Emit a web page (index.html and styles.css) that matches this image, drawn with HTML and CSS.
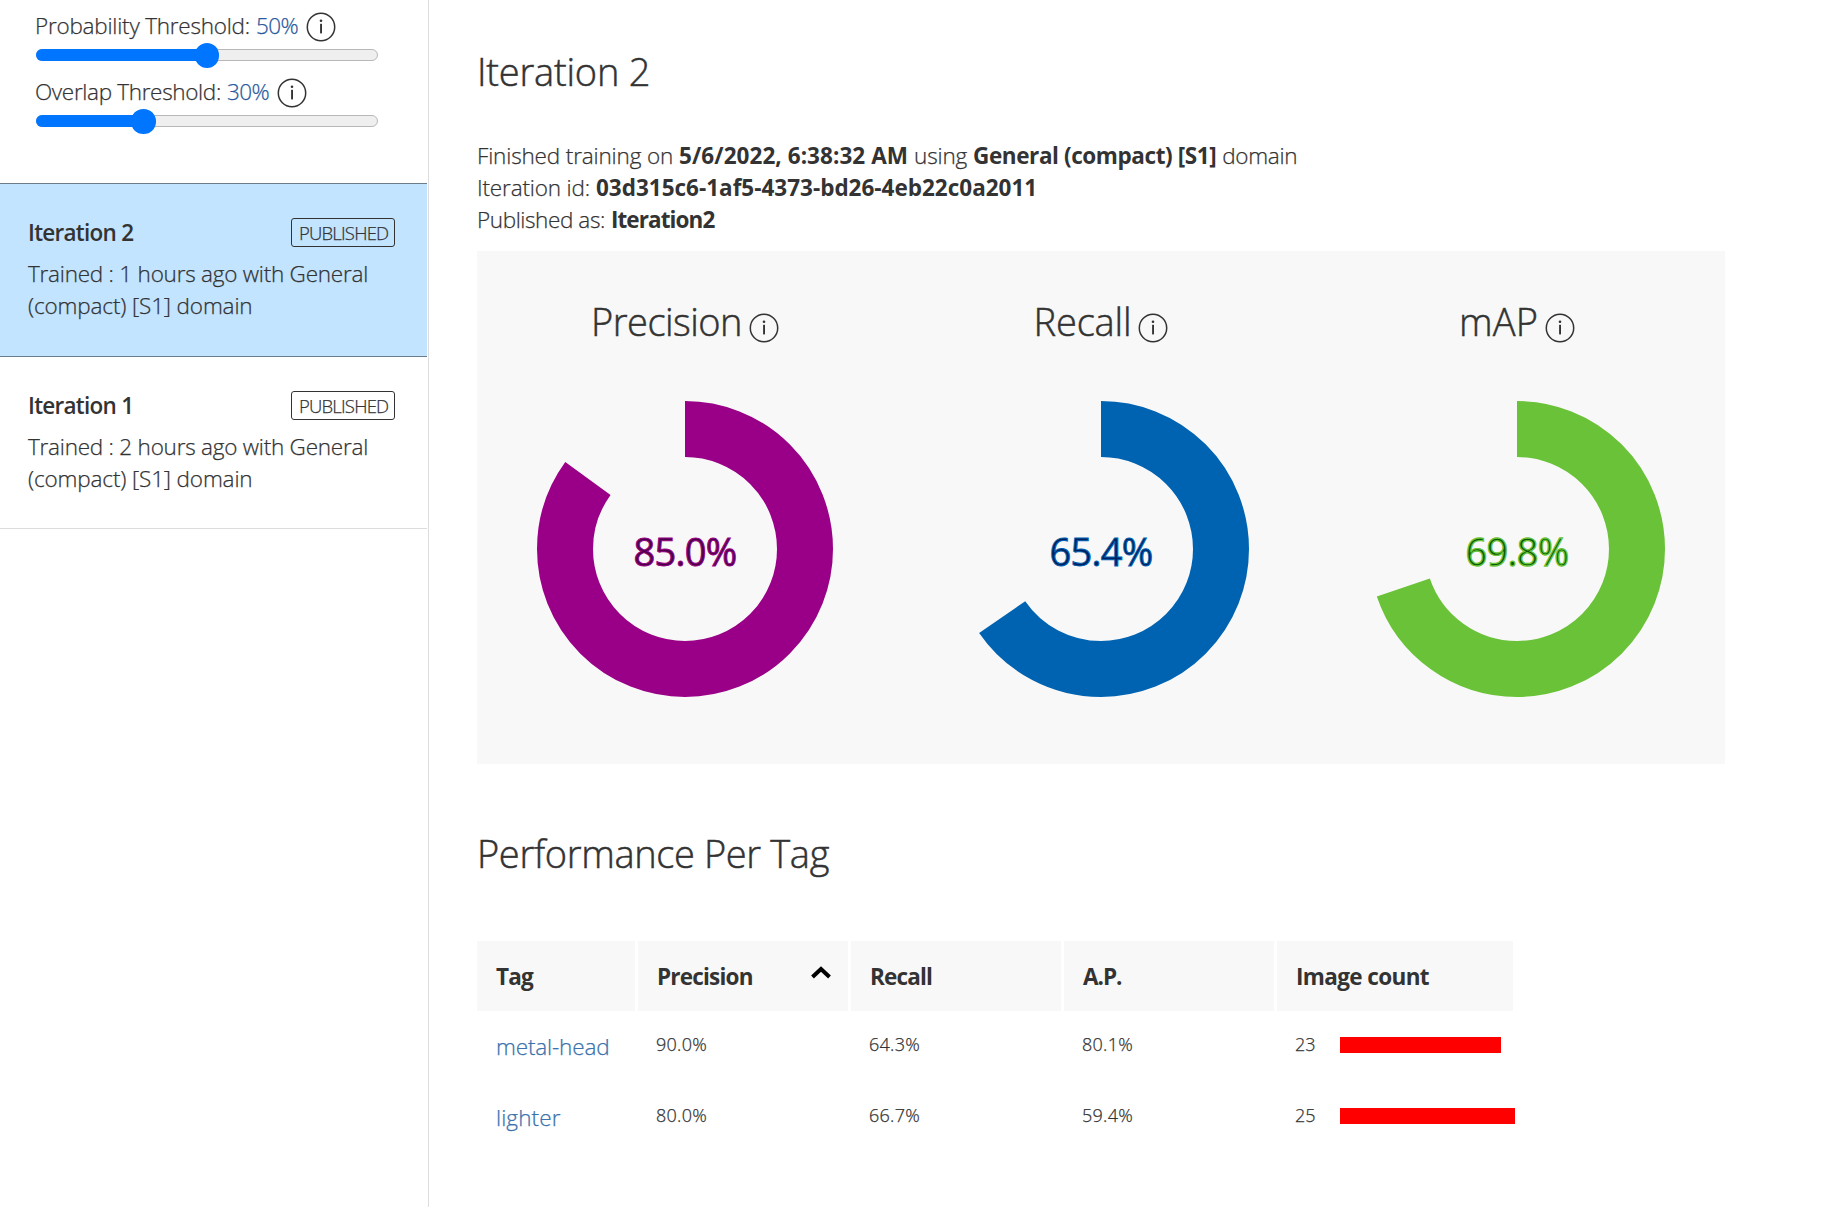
FILE: index.html
```html
<!DOCTYPE html>
<html lang="en">
<head>
<meta charset="utf-8">
<title>Iteration 2 - Performance</title>
<link rel="stylesheet" href="styles.css">
</head>
<body>
<svg class="defs" width="0" height="0">
  <symbol id="info" viewBox="0 0 30 30">
    <circle cx="15" cy="15" r="13.7" fill="none" stroke="currentColor" stroke-width="1.5"/>
    <rect x="14.1" y="11.8" width="1.9" height="9.6" fill="currentColor"/>
    <circle cx="15" cy="8.7" r="1.3" fill="currentColor"/>
  </symbol>
</svg>
<div class="app">
  <aside class="sidebar">
    <div class="thresholds">
      <div class="threshold"><span class="t-prob">Probability Threshold:</span><span class="t-pct value">50%</span><svg class="info"><use href="#info"/></svg></div>
      <div class="slider"><div class="fill" style="width:50%"></div></div>
      <div class="threshold second"><span class="t-over">Overlap Threshold:</span><span class="t-pct value">30%</span><svg class="info"><use href="#info"/></svg></div>
      <div class="slider"><div class="fill" style="width:31.4%"></div></div>
    </div>
    <div class="iteration selected">
      <div class="iteration-head"><span class="t-iter iteration-name">Iteration 2</span><span class="badge"><span class="t-pub">PUBLISHED</span></span></div>
      <p class="trained"><span class="t-train">Trained : 1 hours ago with General</span><br><span class="t-comp">(compact) [S1] domain</span></p>
    </div>
    <div class="iteration">
      <div class="iteration-head"><span class="t-iter iteration-name">Iteration 1</span><span class="badge"><span class="t-pub">PUBLISHED</span></span></div>
      <p class="trained"><span class="t-train">Trained : 2 hours ago with General</span><br><span class="t-comp">(compact) [S1] domain</span></p>
    </div>
  </aside>
  <main class="main">
    <h1 class="heading"><span class="t-h1">Iteration 2</span></h1>
    <div class="meta">
      <div class="meta-line"><span class="t-fin">Finished training on</span><b class="t-date">5/6/2022, 6:38:32 AM</b><span class="t-using">using</span><b class="t-gen">General (compact) [S1]</b><span class="t-dom">domain</span></div>
      <div class="meta-line"><span class="t-itid">Iteration id:</span><b class="t-guid">03d315c6-1af5-4373-bd26-4eb22c0a2011</b></div>
      <div class="meta-line"><span class="t-pubas">Published as:</span><b class="t-it2">Iteration2</b></div>
    </div>
    <section class="metrics">
      <div class="metric precision">
        <h2 class="metric-title"><span class="t-prec">Precision</span><svg class="info"><use href="#info"/></svg></h2>
        <div class="donut"><svg viewBox="0 0 296 296"><circle cx="148" cy="148" r="120" pathLength="100" stroke-dasharray="85 100"/></svg><span class="t-num">85.0%</span></div>
      </div>
      <div class="metric recall">
        <h2 class="metric-title"><span class="t-rec">Recall</span><svg class="info"><use href="#info"/></svg></h2>
        <div class="donut"><svg viewBox="0 0 296 296"><circle cx="148" cy="148" r="120" pathLength="100" stroke-dasharray="65.4 100"/></svg><span class="t-num">65.4%</span></div>
      </div>
      <div class="metric map">
        <h2 class="metric-title"><span class="t-map">mAP</span><svg class="info"><use href="#info"/></svg></h2>
        <div class="donut"><svg viewBox="0 0 296 296"><circle cx="148" cy="148" r="120" pathLength="100" stroke-dasharray="69.8 100"/></svg><span class="t-num">69.8%</span></div>
      </div>
    </section>
    <h1 class="heading per-tag"><span class="t-perf">Performance Per Tag</span></h1>
    <div class="table">
      <div class="th"><span class="t-tag">Tag</span></div>
      <div class="th"><span class="t-thp">Precision</span><svg class="sort" viewBox="0 0 20 13"><path d="M1.5 11 L10 3 L18.5 11" fill="none" stroke="#000" stroke-width="4"/></svg></div>
      <div class="th"><span class="t-thr">Recall</span></div>
      <div class="th"><span class="t-ap">A.P.</span></div>
      <div class="th"><span class="t-img">Image count</span></div>
      <div class="td tag"><span class="t-metal">metal-head</span></div>
      <div class="td"><span class="t-val">90.0%</span></div>
      <div class="td"><span class="t-val">64.3%</span></div>
      <div class="td"><span class="t-val">80.1%</span></div>
      <div class="td"><span class="t-cnt">23</span><div class="bar" style="width:161px"></div></div>
      <div class="td tag"><span class="t-light">lighter</span></div>
      <div class="td"><span class="t-val">80.0%</span></div>
      <div class="td"><span class="t-val">66.7%</span></div>
      <div class="td"><span class="t-val">59.4%</span></div>
      <div class="td"><span class="t-cnt">25</span><div class="bar" style="width:175px"></div></div>
    </div>
  </main>
</div>
</body>
</html>
```
FILE: styles.css
```css
* { box-sizing: border-box; }
body {
  margin: 0;
  background: #fff;
  color: #333;
  font-family: "Open Sans", "Noto Sans", sans-serif;
  font-size: 22.5px;
  font-weight: 300;
  line-height: 32px;
  -webkit-text-stroke: 0.25px currentColor;
}
h1, h2, p { margin: 0; font-weight: 300; }
b { font-weight: 700; -webkit-text-stroke: 0; }
span, b { white-space: nowrap; }
.defs { display: block; height: 0; }
.app { display: flex; height: 1207px; overflow: hidden; }
.sidebar { width: 429px; flex: none; border-right: 1px solid #ddd; }
.info { width: 30px; height: 30px; flex: none; color: #333; }

.thresholds { height: 183px; padding: 10px 0 0 35px; }
.threshold { display: flex; height: 33px; gap: 6px; }
.threshold.second { margin-top: 15px; }
.threshold .value { color: #2a5a9e; }
.threshold .info { margin: 2px 0 0 2px; }
.slider {
  width: 342px;
  height: 12px;
  margin: 6px 0 0 1px;
  background: #efefef;
  border: 1px solid #b8b8b8;
  border-radius: 6px;
}
.fill { position: relative; height: 12px; margin: -1px; border-radius: 6px; background: #0075ff; }
.fill::after {
  content: "";
  position: absolute;
  right: -13px;
  top: -6px;
  width: 24.5px;
  height: 24.5px;
  border-radius: 50%;
  background: #0075ff;
}

.iteration { width: 427px; height: 172px; padding: 33px 32px 0 28px; border-bottom: 1px solid #ddd; }
.iteration.selected { height: 174px; background: #c2e4ff; border-top: 1px solid #6b7c8a; border-bottom: 1px solid #6b7c8a; }
.iteration-head { display: flex; justify-content: space-between; }
.iteration-name { font-weight: 600; -webkit-text-stroke: 0; }
.badge { width: 104px; height: 29px; margin-top: 1px; border: 1px solid #333; border-radius: 3px; font-size: 18.5px; line-height: 28px; padding-left: 7px; }
.trained { margin-top: 9px; }

.main { padding: 47px 0 0 48px; flex: none; }
.heading { font-size: 38px; line-height: 48px; -webkit-text-stroke: 0.5px currentColor; }
.meta { margin-top: 45px; }
.meta-line { display: flex; gap: 6px; }
.metrics { display: grid; grid-template-columns: repeat(3, 416px); height: 513px; margin-top: 15px; background: #f8f8f8; }
.metric { padding-top: 45px; }
.metric-title { display: flex; justify-content: center; gap: 7px; height: 50px; font-size: 38px; line-height: 50px; -webkit-text-stroke: 0.5px currentColor; }
.metric-title .info { margin-top: 17px; }
.donut {
  display: grid;
  justify-items: center;
  width: 296px;
  height: 296px;
  margin: 55px auto 0;
  font-size: 38px;
  line-height: 300px;
  font-weight: 400;
}
.donut > * { grid-area: 1 / 1; }
.donut svg { width: 296px; height: 296px; transform: rotate(-90deg); }
.donut circle { fill: none; stroke: currentColor; stroke-width: 56; }
.precision .donut { color: #990087; }
.recall .donut { color: #0063b1; }
.map .donut { color: #69c237; }
.donut span { -webkit-text-stroke: 1px currentColor; }
.precision .donut span { -webkit-text-fill-color: #4a0045; }
.recall .donut span { -webkit-text-fill-color: #002060; }
.map .donut span { -webkit-text-fill-color: #0a5a08; -webkit-text-stroke-width: 1.3px; }

.per-tag { margin-top: 65px; }
.table {
  display: grid;
  grid-template-columns: 158px 210px 210px 210px 236px;
  grid-template-rows: 70px 71px 71px;
  column-gap: 3px;
  margin-top: 64px;
}
.th { display: flex; justify-content: space-between; padding: 20px 17px 0 19px; background: #f8f8f8; font-weight: 700; -webkit-text-stroke: 0; }
.sort { width: 20px; height: 13px; margin-top: 5px; }
.td { display: flex; padding: 17px 0 0 18px; font-size: 18px; }
.td.tag { padding: 20px 0 0 19px; font-size: 22.5px; color: #3a72ad; }
.bar { flex: none; height: 16px; margin: 9px 0 0 24px; background: #f00; }

/* Tracking per label */
.t-prob { letter-spacing: -0.22px; }
.t-pct { letter-spacing: -0.62px; }
.t-over { letter-spacing: -0.33px; }
.t-iter { letter-spacing: -0.74px; }
.t-pub { letter-spacing: -0.8px; }
.t-train { letter-spacing: -0.23px; }
.t-comp { letter-spacing: -0.14px; }
.t-h1 { letter-spacing: -0.22px; }
.t-fin { letter-spacing: -0.15px; }
.t-date { letter-spacing: 0.06px; }
.t-using { letter-spacing: -0.17px; }
.t-gen { letter-spacing: -0.41px; }
.t-dom { letter-spacing: -0.29px; }
.t-itid { letter-spacing: -0.16px; }
.t-pubas { letter-spacing: -0.4px; }
.t-it2 { letter-spacing: -0.9px; }
.t-prec { letter-spacing: -0.51px; }
.t-rec { letter-spacing: -0.14px; }
.t-map { letter-spacing: 0.13px; }
.t-num { letter-spacing: -0.72px; }
.t-perf { letter-spacing: -0.36px; }
.t-tag, .t-thp { letter-spacing: -0.8px; }
.t-thr { letter-spacing: -0.84px; }
.t-ap { letter-spacing: -1px; }
.t-img { letter-spacing: -0.62px; }
.t-metal { letter-spacing: -0.15px; }
.t-val { letter-spacing: 0.27px; }
.t-light { letter-spacing: 0.1px; }
```
